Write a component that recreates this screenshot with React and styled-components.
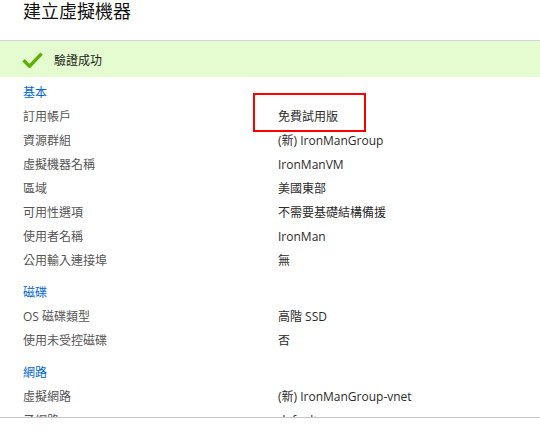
import React from 'react';
import styled, { createGlobalStyle } from 'styled-components';

const GlobalStyle = createGlobalStyle`
  html, body {
    margin: 0;
    padding: 0;
    background: #ffffff;
  }
  body {
    font-family: 'Segoe UI', 'Open Sans', 'Noto Sans CJK TC', sans-serif;
  }
`;

const sections = [
  {
    title: '基本',
    rows: [
      ['訂用帳戶', '免費試用版', true],
      ['資源群組', '(新) IronManGroup'],
      ['虛擬機器名稱', 'IronManVM'],
      ['區域', '美國東部'],
      ['可用性選項', '不需要基礎結構備援'],
      ['使用者名稱', 'IronMan'],
      ['公用輸入連接埠', '無'],
    ],
  },
  {
    title: '磁碟',
    rows: [
      ['OS 磁碟類型', '高階 SSD'],
      ['使用未受控磁碟', '否'],
    ],
  },
  {
    title: '網路',
    rows: [
      ['虛擬網路', '(新) IronManGroup-vnet'],
      ['子網路', 'default'],
      ['公用 IP', '(新) IronManVM-ip'],
    ],
  },
];

function CheckIcon() {
  return (
    <svg width="21" height="16" viewBox="0 0 21 16">
      <path d="M1.5 8.2 L7.6 14.2 L19.6 1.6" fill="none" stroke="#5cb000" strokeWidth="3.4" strokeLinejoin="miter" />
    </svg>
  );
}

function App() {
  return (
    <Page>
      <GlobalStyle />
      <Title>建立虛擬機器</Title>
      <Banner>
        <CheckIcon />
        <span>驗證成功</span>
      </Banner>
      <Body>
        {sections.map((s, i) => (
          <Section key={s.title} first={i === 0}>
            <SectionTitle>{s.title}</SectionTitle>
            {s.rows.map(([label, value, marked]) => (
              <Row key={label}>
                <Label>{label}</Label>
                <Value>
                  {value}
                  {marked && <Highlight />}
                </Value>
              </Row>
            ))}
          </Section>
        ))}
      </Body>
      <Footer />
    </Page>
  );
}

export default App;

const Page = styled.div`
  width: 540px;
  height: 431px;
  display: flex;
  flex-direction: column;
  overflow: hidden;
`;

const Title = styled.div`
  height: 40px;
  padding: 0 23px;
  font-family: 'Segoe UI', 'Noto Sans CJK TC', sans-serif;
  font-size: 18px;
  line-height: 20px;
  color: #111111;
  box-sizing: border-box;
`;

const Banner = styled.div`
  height: 37px;
  border-top: 1px solid #d4d4d4;
  background-color: #e5fcd0;
  display: flex;
  align-items: center;
  padding-left: 22px;
  box-sizing: border-box;
  > svg {
    margin-right: 11px;
    margin-top: 1px;
  }
  > span {
    font-size: 12px;
    color: #222222;
    font-family: 'Noto Sans CJK TC', sans-serif;
  }
`;

const Body = styled.div`
  flex: 1;
  overflow: hidden;
  padding-left: 23px;
`;

const Section = styled.div`
  margin-top: ${(p) => (p.first ? '3px' : '7px')};
`;

const SectionTitle = styled.div`
  height: 24px;
  line-height: 24px;
  margin-bottom: 1px;
  font-size: 12px;
  color: #0066d6;
  font-family: 'Noto Sans CJK TC', sans-serif;
`;

const Row = styled.div`
  display: grid;
  grid-template-columns: 255px 1fr;
  height: 24px;
  line-height: 24px;
  font-size: 12px;
`;

const Label = styled.div`
  color: #555555;
  font-family: 'Segoe UI', 'Open Sans', 'Noto Sans CJK TC', sans-serif;
`;

const Value = styled.div`
  position: relative;
  color: #2b2b2b;
  font-family: 'Segoe UI', 'Open Sans', 'Noto Sans CJK TC', sans-serif;
`;

const Highlight = styled.div`
  position: absolute;
  left: -25px;
  top: -12px;
  width: 113px;
  height: 39px;
  border: 2px solid #ff0000;
  box-sizing: border-box;
  pointer-events: none;
`;

const Footer = styled.div`
  height: 13px;
  border-top: 1px solid #c6c6c6;
  background: #ffffff;
  flex-shrink: 0;
`;
